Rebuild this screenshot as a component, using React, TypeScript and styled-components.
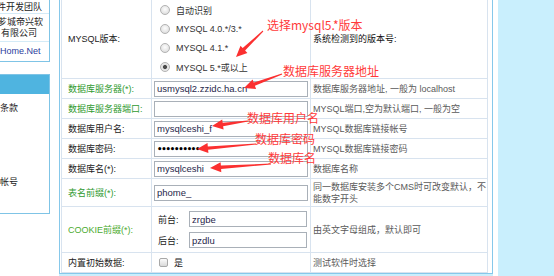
import React from "react";
import styled, {createGlobalStyle, css} from "styled-components";

const GlobalStyle = createGlobalStyle`
  html, body {
    margin: 0;
    padding: 0;
    background: #fff;
    overflow: hidden;
  }
  body {
    font-family: "Liberation Sans", "Noto Sans CJK SC", sans-serif;
    font-size: 9px;
    color: #222;
  }
`

type Note = {
    text: string
    left: number
    top: number
    from: [number, number]
    to: [number, number]
}

const notes: Note[] = [
    {text: "选择mysql5.*版本", left: 267, top: 17, from: [263, 31], to: [236, 57]},
    {text: "数据库服务器地址", left: 283, top: 63, from: [282, 74], to: [244, 88]},
    {text: "数据库用户名", left: 247, top: 110, from: [248, 121], to: [212, 126]},
    {text: "数据库密码", left: 255, top: 131, from: [256, 144], to: [197, 149]},
    {text: "数据库名", left: 268, top: 150, from: [271, 164], to: [210, 168]},
]

const arrowPoints = (from: [number, number], to: [number, number]) => {
    const [x1, y1] = from;
    const [x2, y2] = to;
    const len = Math.hypot(x2 - x1, y2 - y1);
    const ux = (x2 - x1) / len, uy = (y2 - y1) / len;
    const nx = -uy, ny = ux;
    const head = 11, headW = 5, shaftW = 1.7, tailW = 0.5;
    const bx = x2 - ux * head, by = y2 - uy * head;
    const pts = [
        [x1 + nx * tailW, y1 + ny * tailW],
        [bx + nx * shaftW, by + ny * shaftW],
        [bx + nx * headW, by + ny * headW],
        [x2, y2],
        [bx - nx * headW, by - ny * headW],
        [bx - nx * shaftW, by - ny * shaftW],
        [x1 - nx * tailW, y1 - ny * tailW],
    ];
    return pts.map(p => p[0].toFixed(1) + "," + p[1].toFixed(1)).join(" ");
}

const versions = ["自动识别", "MYSQL 4.0.*/3.*", "MYSQL 4.1.*", "MYSQL 5.*或以上"];

export default function App() {
    return <Root>
        <GlobalStyle/>
        <Page>
            <Sidebar>
                <InfoBox>
                    <InfoCell $h={17} $pad={5}><Cut $shift={3}>件开发团队</Cut></InfoCell>
                    <InfoCell $h={28} $pad={3}><Cut $shift={2}>芗城帝兴软</Cut><br/><Cut $shift={-1}>有限公司</Cut></InfoCell>
                    <InfoCell $h={19} $pad={4} $link $last>Home.Net</InfoCell>
                </InfoBox>
                <StepBox>
                    <StepHead/>
                    <StepItem $top={5}>条款</StepItem>
                    <StepItem $top={55.5}>帐号</StepItem>
                </StepBox>
            </Sidebar>
            <MainWrap>
                <Panel>
                    <FormTable>
                        <colgroup>
                            <col style={{width: 90}}/>
                            <col style={{width: 159}}/>
                            <col style={{width: 177}}/>
                        </colgroup>
                        <tbody>
                        <tr>
                            <LabelCell $h={80}>MYSQL版本:</LabelCell>
                            <FieldCell>
                                <RadioList>
                                    {versions.map((v, i) =>
                                        <RadioRow key={v}>
                                            <Radio $on={i === 3}/>
                                            <span>{v}</span>
                                        </RadioRow>)}
                                </RadioList>
                            </FieldCell>
                            <DescCell $dark>系统检测到的版本号:</DescCell>
                        </tr>
                        <tr>
                            <LabelCell $h={20} $green>数据库服务器(*):</LabelCell>
                            <FieldCell><TextInput defaultValue="usmysql2.zzidc.ha.cn"/></FieldCell>
                            <DescCell>数据库服务器地址, 一般为 localhost</DescCell>
                        </tr>
                        <tr>
                            <LabelCell $h={20} $green>数据库服务器端口:</LabelCell>
                            <FieldCell><TextInput defaultValue=""/></FieldCell>
                            <DescCell>MYSQL端口,空为默认端口, 一般为空</DescCell>
                        </tr>
                        <tr>
                            <LabelCell $h={20}>数据库用户名:</LabelCell>
                            <FieldCell><TextInput defaultValue="mysqlceshi_f"/></FieldCell>
                            <DescCell>MYSQL数据库链接帐号</DescCell>
                        </tr>
                        <tr>
                            <LabelCell $h={20}>数据库密码:</LabelCell>
                            <FieldCell><TextInput $secret defaultValue="••••••••••"/></FieldCell>
                            <DescCell>MYSQL数据库链接密码</DescCell>
                        </tr>
                        <tr>
                            <LabelCell $h={20}>数据库名(*):</LabelCell>
                            <FieldCell><TextInput defaultValue="mysqlceshi"/></FieldCell>
                            <DescCell>数据库名称</DescCell>
                        </tr>
                        <tr>
                            <LabelCell $h={28} $green>表名前缀(*):</LabelCell>
                            <FieldCell><TextInput defaultValue="phome_"/></FieldCell>
                            <DescCell>同一数据库安装多个CMS时可改变默认，不能数字开头</DescCell>
                        </tr>
                        <tr>
                            <LabelCell $h={46} $green $light>COOKIE前缀(*):</LabelCell>
                            <FieldCell>
                                <PrefixRow>
                                    <PrefixLabel>前台:</PrefixLabel>
                                    <TextInput $w={118} defaultValue="zrgbe"/>
                                </PrefixRow>
                                <PrefixRow>
                                    <PrefixLabel>后台:</PrefixLabel>
                                    <TextInput $w={118} defaultValue="pzdlu"/>
                                </PrefixRow>
                            </FieldCell>
                            <DescCell>由英文字母组成，默认即可</DescCell>
                        </tr>
                        <tr>
                            <LabelCell $h={20}>内置初始数据:</LabelCell>
                            <FieldCell>
                                <CheckRow><CheckBox/><span>是</span></CheckRow>
                            </FieldCell>
                            <DescCell>测试软件时选择</DescCell>
                        </tr>
                        </tbody>
                    </FormTable>
                </Panel>
                <BottomStrip/>
            </MainWrap>
            <RightFill/>
        </Page>
        <Notes>
            <svg width="554" height="276" viewBox="0 0 554 276">
                {notes.map(n => <polygon key={n.text} points={arrowPoints(n.from, n.to)} fill="#fb3030"/>)}
            </svg>
            {notes.map(n => <NoteText key={n.text} style={{left: n.left, top: n.top}}>{n.text}</NoteText>)}
        </Notes>
    </Root>
}

const Root = styled.div`
  position: relative;
  width: 554px;
  height: 276px;
  overflow: hidden;
`

const Page = styled.div`
  display: flex;
  margin-top: -3px;
  height: 282px;
`

const Sidebar = styled.aside`
  width: 50px;
  flex-shrink: 0;
  display: flex;
  flex-direction: column;
`

const InfoBox = styled.div`
  border-right: 1px solid #7fc4e6;
  border-bottom: 1px solid #7fc4e6;
  overflow: hidden;
`

const InfoCell = styled.div<{ $h: number, $pad: number, $link?: boolean, $last?: boolean }>`
  height: ${p => p.$h}px;
  padding-top: ${p => p.$pad}px;
  box-sizing: border-box;
  line-height: 11px;
  white-space: nowrap;
  color: ${p => p.$link ? "#2b3c9c" : "#222"};
  border-bottom: ${p => p.$last ? "none" : "1px solid #d4ebf7"};
`

const Cut = styled.span<{ $shift: number }>`
  display: inline-block;
  margin-left: ${p => -p.$shift}px;
`

const StepBox = styled.div`
  margin-top: 12px;
  height: 138px;
  border: 1px solid #7fc4e6;
  border-left: none;
`

const StepHead = styled.div`
  height: 19px;
  background: #4fb4e0;
`

const StepItem = styled.div<{ $top: number }>`
  margin-top: ${p => p.$top}px;
  line-height: 18px;
  height: 18px;
  white-space: nowrap;
`

const MainWrap = styled.main`
  margin-left: 9px;
  padding-right: 5px;
  display: flex;
  flex-direction: column;
`

const Panel = styled.div`
  border: 1px solid #86c8ea;
  padding: 0 4px 0 1px;
  background: #fff;
`

const BottomStrip = styled.div`
  flex: 1;
  background: #c9effd;
`

const RightFill = styled.div`
  flex: 1;
  background: #c9effd;
`

const FormTable = styled.table`
  border-collapse: collapse;
  table-layout: fixed;
  width: 426px;
  border: 1px solid #d8e3ef;

  td {
    border: 1px solid #d8e3ef;
    padding: 0;
    vertical-align: middle;
  }
`

const LabelCell = styled.td<{ $h: number, $green?: boolean, $light?: boolean }>`
  height: ${p => p.$h - 1}px;
  padding-left: 6px !important;
  white-space: nowrap;
  overflow: hidden;
  color: ${p => p.$light ? "#4bab2f" : p.$green ? "#2f9a2f" : "#222"};
`

const FieldCell = styled.td`
  padding-left: 2px !important;
`

const DescCell = styled.td<{ $dark?: boolean }>`
  padding-left: 2px !important;
  line-height: 12px;
  color: ${p => p.$dark ? "#111" : "#5a5a5a"};
`

const RadioList = styled.div`
  display: flex;
  flex-direction: column;
  padding-left: 6px;
`

const RadioRow = styled.label`
  display: flex;
  align-items: center;
  gap: 6px;
  height: 19px;
  color: #333;
`

const Radio = styled.span<{ $on?: boolean }>`
  width: 10px;
  height: 10px;
  box-sizing: border-box;
  border-radius: 50%;
  border: 1px solid #b3b3b3;
  background: radial-gradient(circle at 50% 40%, #fdfdfd 0%, #e4e4e4 65%, #cfcfcf 100%);
  ${p => p.$on && css`
    background: radial-gradient(circle, #4a4a4a 0 1.6px, #dcdcdc 2.4px, #eaeaea 60%, #cfcfcf 100%);
  `}
`

const TextInput = styled.input<{ $w?: number, $secret?: boolean }>`
  width: ${p => p.$w ?? 154}px;
  height: 16px;
  box-sizing: border-box;
  margin: 0;
  padding: 0 2px;
  border: 1px solid #a9b0b8;
  border-radius: 0;
  background: #fff;
  font-family: "Liberation Sans", "Noto Sans CJK SC", sans-serif;
  font-size: 9.5px;
  color: #1f1f4a;
  outline: none;
  ${p => p.$secret && css`
    font-family: "DejaVu Sans", sans-serif;
    font-size: 8.5px;
    font-weight: bold;
    letter-spacing: -1.2px;
    color: #000;
  `}
`

const PrefixRow = styled.div`
  display: flex;
  align-items: center;
  height: 21px;
  padding-left: 4px;
`

const PrefixLabel = styled.span`
  width: 31px;
  color: #222;
`

const CheckRow = styled.label`
  display: flex;
  align-items: center;
  gap: 6px;
  padding-left: 5px;
`

const CheckBox = styled.span`
  width: 9px;
  height: 9px;
  box-sizing: border-box;
  border: 1px solid #a8a8a8;
  border-radius: 2px;
  background: linear-gradient(#fbfbfb, #d9d9d9);
`

const Notes = styled.div`
  position: absolute;
  inset: 0;
  pointer-events: none;

  svg {
    position: absolute;
    left: 0;
    top: 0;
  }
`

const NoteText = styled.span`
  position: absolute;
  font-family: "Noto Sans CJK SC", "Liberation Sans", sans-serif;
  font-size: 12px;
  line-height: 16px;
  color: #ff3a3a;
  white-space: nowrap;
`
